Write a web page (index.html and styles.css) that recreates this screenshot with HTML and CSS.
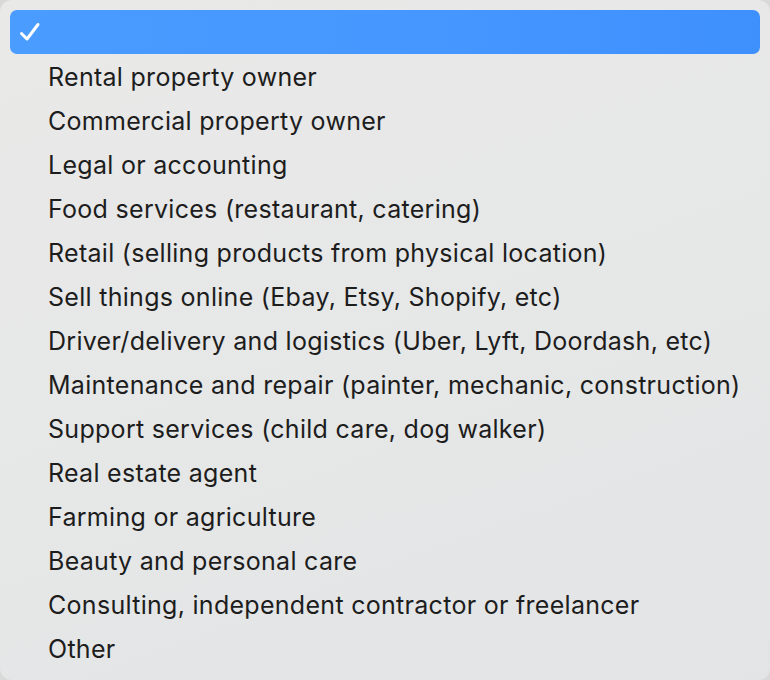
FILE: index.html
```html
<!DOCTYPE html>
<html>
<head>
<meta charset="utf-8">
<link rel="stylesheet" href="styles.css">
</head>
<body>
<div class="menu">
  <div class="item selected"><svg class="check" width="22" height="20" viewBox="0 0 22 20"><path d="M2.5 11.5 L8 17 L19 2.5" fill="none" stroke="#fff" stroke-width="3" stroke-linecap="round" stroke-linejoin="round"/></svg><span></span></div>
  <div class="item"><span>Rental property owner</span></div>
  <div class="item"><span>Commercial property owner</span></div>
  <div class="item"><span>Legal or accounting</span></div>
  <div class="item"><span>Food services (restaurant, catering)</span></div>
  <div class="item"><span>Retail (selling products from physical location)</span></div>
  <div class="item"><span>Sell things online (Ebay, Etsy, Shopify, etc)</span></div>
  <div class="item"><span>Driver/delivery and logistics (Uber, Lyft, Doordash, etc)</span></div>
  <div class="item"><span>Maintenance and repair (painter, mechanic, construction)</span></div>
  <div class="item"><span>Support services (child care, dog walker)</span></div>
  <div class="item"><span>Real estate agent</span></div>
  <div class="item"><span>Farming or agriculture</span></div>
  <div class="item"><span>Beauty and personal care</span></div>
  <div class="item"><span>Consulting, independent contractor or freelancer</span></div>
  <div class="item"><span>Other</span></div>
</div>
</body>
</html>
```
FILE: styles.css
```css
html, body {
  margin: 0;
  padding: 0;
  background: #d9d9d9;
}
.menu {
  width: 770px;
  height: 680px;
  box-sizing: border-box;
  padding: 10px;
  border-radius: 12px;
  background: linear-gradient(160deg, #e9e9e8 0%, #e6e7e7 50%, #e3e4e5 100%);
  font-family: Inter, "Noto Sans", sans-serif;
  font-size: 25px;
  letter-spacing: 0.29px;
  color: #1d1d1d;
}
.item {
  height: 44px;
  display: flex;
  align-items: center;
  padding-left: 38px;
  position: relative;
}
.item span {
  position: relative;
  top: 1px;
}
.selected {
  background: linear-gradient(90deg, #4b9cff 0%, #4596ff 60%, #3e90fd 100%);
  border-radius: 7px;
}
.check {
  position: absolute;
  left: 9px;
  top: 12px;
}
```
